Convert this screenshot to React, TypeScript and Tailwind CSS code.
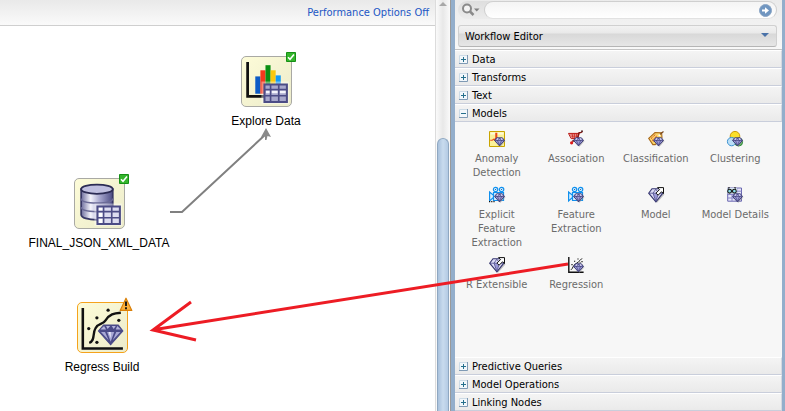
import React from "react";

type Kind =
  | "anomaly"
  | "association"
  | "classification"
  | "clustering"
  | "explicit"
  | "feature"
  | "model"
  | "details"
  | "regression";

const MODELS: { label: string; kind: Kind }[] = [
  { label: "Anomaly Detection", kind: "anomaly" },
  { label: "Association", kind: "association" },
  { label: "Classification", kind: "classification" },
  { label: "Clustering", kind: "clustering" },
  { label: "Explicit Feature Extraction", kind: "explicit" },
  { label: "Feature Extraction", kind: "feature" },
  { label: "Model", kind: "model" },
  { label: "Model Details", kind: "details" },
  { label: "R Extensible", kind: "model" },
  { label: "Regression", kind: "regression" },
];

/* Small gem that marks every mining item, drawn in the lower right corner. */
function SmallGem() {
  return (
    <g>
      <path d="M8 7.5h6.500l2 2.800-5.200 5.700-5.300-5.700z" fill="#9a9a9a" opacity="0.5" />
      <path d="M7.600 6.800h5.800l2 2.700-4.900 5.400-4.900-5.400z" fill="#9c9ad6" stroke="#35356f" strokeWidth="0.9" />
      <path d="M5.800 9.500h9.400M8.400 9.500l2.100 4.800 2.100-4.800-2.100-2.400z" fill="none" stroke="#35356f" strokeWidth="0.6" />
      <path d="M8 7.600h1.200v1H8zM12 7.600h1.200v1H12z" fill="#fff" />
    </g>
  );
}

function Camera() {
  return (
    <g fill="#d8f0ff" stroke="#1090ee" strokeWidth="1.2">
      <circle cx="6.600" cy="2.500" r="2.200" />
      <circle cx="12.600" cy="2.500" r="2.200" />
      <path d="M4.500 5.500h10v8h-10z" />
      <path d="M.6 5v9l3.900-3.500V8.300z" />
      <path d="M6.100 2.500h1M12.100 2.500h1" stroke="#1a5fa8" strokeWidth="1" />
    </g>
  );
}

function ModelIcon({ kind }: { kind: Kind }) {
  return (
    <svg className="size-4 shrink-0 overflow-visible" viewBox="0 0 16 16" aria-hidden="true">
      {kind === "anomaly" && (
        <g>
          <path d="M.5.5h15v15H.5z" fill="#fbf19a" stroke="#c9a400" />
          <path d="M1.500 1.500h13v2h-13z" fill="#fffbd8" />
          <path d="M1.200 9.300h2l1.200-1 1.400 1V8l1-.5V2.200h1V8h3" fill="none" stroke="#ec4a18" strokeWidth="1.100" />
          <SmallGem />
        </g>
      )}
      {kind === "association" && (
        <g>
          <path d="M.5 2.400h10.800L9.700 7.600H3.200z" fill="#fbd0cc" stroke="#b81410" strokeWidth="1" />
          <path d="M2 4h9M3 5.800h7.400M4 2.400l1 5M6.400 2.400v5M8.800 2.400l-.6 5" stroke="#c82018" strokeWidth=".8" />
          <path d="M14.600.4l-1.800 1.200H11L9.400 7.600 4 10.200h5" fill="none" stroke="#7c1410" strokeWidth="1.200" />
          <circle cx="3.600" cy="11.800" r="1.600" fill="#e01818" />
          <path d="M13 .2h2" stroke="#502020" strokeWidth="1.200" />
          <SmallGem />
        </g>
      )}
      {kind === "classification" && (
        <g>
          <path d="M.7 7.400L7 1.500l6.600.3.4 5-6.800 6.800H4.800z" fill="#fbd66a" stroke="#a8691a" strokeWidth="1.100" />
          <path d="M3 7.600L7.600 3.200M4 9.600l5-4.800M5.600 11l4-4" stroke="#d03a18" strokeWidth="1" strokeDasharray="1.4 .6" />
          <path d="M11.800 3.400L15.500.6" stroke="#7a4a20" strokeWidth="1.200" />
          <circle cx="11.400" cy="4.200" r="1" fill="#fff" />
          <SmallGem />
        </g>
      )}
      {kind === "clustering" && (
        <g>
          <circle cx="8" cy="5.200" r="4.800" fill="#fbe02a" stroke="#cf9a08" strokeWidth="1" />
          <circle cx="11.600" cy="11" r="4" fill="#5fc25a" stroke="#2c8a38" strokeWidth="1" />
          <circle cx="4.600" cy="10.600" r="4.200" fill="#b5dcf6" fillOpacity=".9" stroke="#3d92d0" strokeWidth="1" />
          <SmallGem />
        </g>
      )}
      {kind === "explicit" && (
        <g>
          <Camera />
          <SmallGem />
          <path d="M0 14.600h6" stroke="#111" strokeWidth="1.200" strokeDasharray="1.200 1" />
        </g>
      )}
      {kind === "feature" && (
        <g>
          <Camera />
          <SmallGem />
        </g>
      )}
      {kind === "model" && (
        <g>
          <path d="M5 3h7.400l4 4.400L9 15.800.8 7z" fill="#8a8a8a" opacity=".5" />
          <path d="M4 1.700h7.600l3.200 4.500-6.900 8.600L.7 6.200z" fill="#dcdcf6" stroke="#35356f" strokeWidth="1.100" />
          <path d="M5.200 6.400h5l-2.400 7.400z" fill="#9a98d8" />
          <path d="M1 6.200h13.400M5 6.200l2.800 8 2.800-8-2.800-4z" fill="none" stroke="#4b4b8c" strokeWidth=".8" />
          <path d="M9.500.6h6v6l-1.900-1.900-3.500 3.500-2.100-2.100 3.500-3.500z" fill="#fff" stroke="#111" strokeWidth="1" />
        </g>
      )}
      {kind === "details" && (
        <g>
          <path d="M.7 1h13.800v13.200H.7z" fill="#e6e6fa" stroke="#6a68b0" strokeWidth="1" />
          <path d="M.7 7.500h13.800M.7 11h13.800M5 1v13M9.800 1v13M9.800 4.200h4.700" stroke="#8886c6" strokeWidth="1" />
          <path d="M.3 1.200h9.600v5.200H.3z" fill="#e8fbff" />
          <circle cx="2.600" cy="4.200" r="1.900" fill="#8de0ec" stroke="#111" strokeWidth="1.100" />
          <circle cx="7.400" cy="4.200" r="1.900" fill="#8de0ec" stroke="#111" strokeWidth="1.100" />
          <path d="M1 1.200l1.600-.6M9 1.200L7.400.6M4.400 3.800h1.200" stroke="#111" strokeWidth="1.100" />
          <SmallGem />
        </g>
      )}
      {kind === "regression" && (
        <g>
          <path d="M.8 0v15.200h14.800" fill="none" stroke="#111" strokeWidth="1.400" />
          <path d="M3 12.800c2-1.400 2-4.400 4.400-5.800S11 4.600 14 1.400" fill="none" stroke="#111" strokeWidth="1" />
          <path d="M3.400 7.600h1.200M6 4.200h1.200M9.400 2h1.200M13.400 4.600h1.200M11.600 5.800h1" stroke="#111" strokeWidth="1.100" />
          <SmallGem />
        </g>
      )}
    </svg>
  );
}

/* Table overlay shared by the data nodes. */
function TableMark({ header }: { header?: boolean }) {
  return (
    <g>
      <path d="M20 25h27v22H20z" fill="#fff" opacity="0.4" />
      <path d="M23 28h22v17H23z" fill={header ? "#a8a8cc" : "#dcdcf0"} />
      {header ? (
        <path d="M24.500 33.500h4v3h-4zM30 33.500h6v3h-6zM38 33.500h6v3h-6z" fill="#f4f4fc" />
      ) : (
        <path d="M24 29h4v3h-4zM24 34h4v4h-4zM24 40h4v4h-4z" fill="#fff" />
      )}
      <path d="M23 28h22v17H23z" fill="none" stroke="#4c4c86" strokeWidth="2" />
      <path d="M23 33h22M23 39h22M29 28v17M37 28v17" stroke="#4c4c86" strokeWidth="1.600" />
    </g>
  );
}

function ExploreArt() {
  return (
    <g>
      <path d="M6.500 6v33.500h17" fill="none" stroke="#111" strokeWidth="2.700" />
      <path d="M14 20h5v17h-5z" fill="#0c5bc6" />
      <path d="M19 14h5v23h-5z" fill="#f3391c" />
      <path d="M24 9h5v28h-5z" fill="#0a8f12" />
      <path d="M29 14h5v23h-5z" fill="#fbc80c" />
      <path d="M34 19h5v18h-5z" fill="#149af4" />
      <TableMark header />
    </g>
  );
}

function DatabaseArt() {
  return (
    <g>
      <defs>
        <linearGradient id="drum" x1="0" x2="1">
          <stop offset="0" stopColor="#6c6c9c" />
          <stop offset="0.300" stopColor="#f4f4fc" />
          <stop offset="0.600" stopColor="#a4a4cc" />
          <stop offset="1" stopColor="#4c4c84" />
        </linearGradient>
      </defs>
      <path d="M7 11v25c0 3 7 5 15.500 5S38 39 38 36V11z" fill="url(#drum)" stroke="#383866" strokeWidth="1.700" />
      <path d="M7 20c0 3 7 4.500 15.500 4.500S38 23 38 20M7 28.500c0 3 7 4.500 15.500 4.500S38 31.500 38 28.500" fill="none" stroke="#6a6a96" strokeWidth="1.500" />
      <ellipse cx="22.500" cy="11" rx="15.500" ry="4.500" fill="#c0c0e0" stroke="#2c2c54" strokeWidth="1.800" />
      <TableMark />
    </g>
  );
}

function RegressArt() {
  return (
    <g>
      <path d="M5.700 6v39.500H45" fill="none" stroke="#111" strokeWidth="2.500" />
      <path d="M12 40c6-2 3-9 6-14 3-6 7-3 10-8 4-6 8-7 15-7.500" fill="none" stroke="#111" strokeWidth="2.300" />
      <g fill="#111">
        <circle cx="11.500" cy="26" r="1.600" />
        <circle cx="19.500" cy="15.500" r="1.600" />
        <circle cx="30.500" cy="8" r="1.600" />
        <circle cx="41" cy="18" r="1.600" />
        <circle cx="19.500" cy="39.500" r="1.600" />
      </g>
      <path d="M26 22.500h14.500l4.500 6L33 42 21 28.500z" fill="#4a4a88" stroke="#4a4a88" />
      <path d="M23 27l3.500-3.500 2 3.500zM28.500 23.500h4l-2.500 3zM34 23.500h4l-2 3zM39.500 23.500L43 27h-5z" fill="#b4b4dc" />
      <path d="M23.500 29.500h4l3.500 8zM29.500 29.500h7L33 39zM38.500 29.500h4L35 37.500z" fill="#a8a8d6" />
      <path d="M31 29.500h2v6z" fill="#ececfa" />
    </g>
  );
}

function Badge({ warning }: { warning?: boolean }) {
  if (warning) {
    return (
      <svg className="absolute -right-1.5 -top-1.5 size-3.5" viewBox="0 0 12 12" role="img" aria-label="Warning">
        <path d="M6 1l5 10.500H1z" fill="#fbb03a" stroke="#d97f08" strokeLinejoin="round" />
        <path d="M5.200 3.800h1.600v4H5.200zM5.200 8.800h1.600v1.600H5.200z" fill="#111" />
      </svg>
    );
  }
  return (
    <svg className="absolute -right-[5px] -top-[5px] size-2.5" viewBox="0 0 10 10" role="img" aria-label="Complete">
      <path d="M.5.5h9v9h-9z" fill="#35b52c" stroke="#159015" />
      <path d="M2 5.300l2 2L8 2.500" fill="none" stroke="#fff" strokeWidth="1.500" />
    </svg>
  );
}

function Node({ label, place, warning, children }: { label: string; place: string; warning?: boolean; children: React.ReactNode }) {
  return (
    <button type="button" className={`absolute flex w-40 flex-col items-center gap-1.5 ${place}`}>
      <span
        className={`relative block size-[51px] rounded-[5px] border bg-linear-to-br from-[#fdfcd8] to-[#ecebcb] ${
          warning ? "border-[#f5a31c]" : "border-[#a9a9a4]"
        }`}
      >
        <svg className="absolute -left-px -top-px size-[51px]" viewBox="0 0 50 50" aria-hidden="true">
          {children}
        </svg>
        <Badge warning={warning} />
      </span>
      <span className="text-xs leading-4 text-black [font-family:'Liberation_Sans',Arial,sans-serif]">{label}</span>
    </button>
  );
}

function SectionHeader({ label, open }: { label: string; open?: boolean }) {
  return (
    <button
      type="button"
      aria-expanded={!!open}
      className="flex h-[18px] w-full shrink-0 items-center gap-1 border-b border-r border-t border-b-[#c9cedb] border-r-[#d4d8e0] border-t-white bg-linear-to-b from-[#f4f4f4] to-[#eaeaea] pl-1 text-left text-black"
    >
      <svg className="size-[9px] shrink-0" viewBox="0 0 9 9" aria-hidden="true">
        <path d="M0 0h9v9H0z" fill="#f2f7fb" />
        <path d="M.5 8V.5H8" fill="none" stroke="#cddbe6" />
        <path d="M0 8.500h8.500V0" fill="none" stroke="#7f9ab4" />
        <path d={open ? "M2 4.500h5" : "M2 4.500h5M4.500 2v5"} stroke="#256f8c" />
      </svg>
      <span className="pt-0.5">{label}</span>
    </button>
  );
}

export default function App() {
  return (
    <div className="relative flex h-screen min-h-96 w-full overflow-hidden bg-white text-[11px] leading-[14px] [font-family:'DejaVu_Sans_Condensed','DejaVu_Sans',sans-serif]">
      <main className="flex min-w-0 flex-1 flex-col">
        <header className="flex h-[26px] shrink-0 items-center justify-end border-b border-[#cfcfcf] bg-linear-to-b from-[#e9e9e9] to-[#fafafa] pr-1.5">
          <a href="#options" className="whitespace-nowrap text-[#2257c5]">
            Performance Options Off
          </a>
        </header>
        <section className="relative flex-1" aria-label="Workflow">
          <svg className="pointer-events-none absolute left-0 top-0 size-full" aria-hidden="true">
            <path d="M170 186h12l84-78" fill="none" stroke="#808080" strokeWidth="2" />
            <path d="M266 102l5 9-3.500-1-1 4h-1.500v-4l-4 1z" fill="#8a8a8a" />
          </svg>
          <Node label="Explore Data" place="left-[186px] top-[30px]">
            <ExploreArt />
          </Node>
          <Node label="FINAL_JSON_XML_DATA" place="left-[19px] top-[152px]">
            <DatabaseArt />
          </Node>
          <Node label="Regress Build" place="left-[22px] top-[276px]" warning>
            <RegressArt />
          </Node>
        </section>
      </main>

      <div className="flex w-4 shrink-0 flex-col border-l border-r border-l-[#dcdcdc] border-r-[#9a9a9a] bg-linear-to-r from-[#fafafa] via-[#e8e8e8] to-[#fafafa]">
        <button type="button" aria-label="Scroll up" className="flex h-[138px] shrink-0 justify-center pt-0.5">
          <svg className="h-1 w-2" viewBox="0 0 8 4" aria-hidden="true">
            <path d="M4 0l4 4H0z" fill="#a8a8a8" />
          </svg>
        </button>
        <div className="mx-px flex-1 rounded-t-md border border-b-0 border-[#8fa8c2] bg-linear-to-r from-[#a9c1dc] via-[#c8dbee] to-[#b4cbe4]" />
      </div>

      <aside className="flex w-[334px] shrink-0 flex-col border-l-4 border-r-[3px] border-[#93aecb] bg-[#f7f7f7]">
        <div className="flex flex-col gap-1.5 border-b border-[#c4c4c4] bg-linear-to-b from-[#ebebeb] to-[#f8f8f8] pb-0.5 pl-[3px] pr-[5px] pt-px">
          <div className="flex h-[18px] items-center rounded-full bg-linear-to-b from-[#dedede] to-[#ececec]">
            <button type="button" aria-label="Search options" className="flex w-[26px] shrink-0 items-center pl-1">
              <svg className="h-3.5 w-[18px]" viewBox="0 0 18 14" aria-hidden="true">
                <circle cx="5" cy="5.500" r="4" fill="#f4f4f4" stroke="#8a8a8a" strokeWidth="2" />
                <path d="M8 8.500l3.500 3.500" stroke="#8a8a8a" strokeWidth="2.500" />
                <path d="M12 5.500h5.500L14.700 8.500z" fill="#808080" />
              </svg>
            </button>
            <div className="flex h-full min-w-0 flex-1 items-center rounded-full border border-[#cfcfcf] border-b-[#e2e2e2] bg-linear-to-b from-[#f4f4f4] to-white pl-2 pr-1">
              <input aria-label="Search components" className="h-3.5 min-w-0 flex-1 bg-transparent outline-none" />
              <button type="button" aria-label="Go" className="size-[13px]">
                <svg className="size-[13px]" viewBox="0 0 13 13" aria-hidden="true">
                  <circle cx="6.500" cy="6.500" r="6" fill="#6f95c0" stroke="#8aa5c4" />
                  <path d="M3 6.500h4" stroke="#fff" strokeWidth="2" />
                  <path d="M6 3.300l4 3.200-4 3.200z" fill="#fff" />
                </svg>
              </button>
            </div>
          </div>
          <div className="relative flex h-[22px]">
            <select
              aria-label="Component page"
              className="w-full appearance-none rounded-[3px] border border-[#d0d0d0] border-b-[#b5b5b5] bg-[linear-gradient(#f2f2f2_0%,#e9e9e9_35%,#d8d8d8_40%,#e6e6e6_100%)] pl-1.5 pt-0.5 text-black outline-none"
            >
              <option>Workflow Editor</option>
            </select>
            <svg className="pointer-events-none absolute right-2 top-2 h-1 w-2" viewBox="0 0 8 4" aria-hidden="true">
              <path d="M0 0h8L4 4z" fill="#4a72a8" />
            </svg>
          </div>
        </div>

        <SectionHeader label="Data" />
        <SectionHeader label="Transforms" />
        <SectionHeader label="Text" />
        <SectionHeader label="Models" open />
        <div className="grid min-h-0 flex-1 grid-cols-4 content-start gap-y-[7px] pl-0.5 pr-[7px] pt-[9px]">
          {MODELS.map((m) => (
            <button
              key={m.label}
              type="button"
              className="flex flex-col items-center gap-[5px] px-1 text-center text-[#6b6b6b]"
            >
              <ModelIcon kind={m.kind} />
              <span>{m.label}</span>
            </button>
          ))}
        </div>
        <SectionHeader label="Predictive Queries" />
        <SectionHeader label="Model Operations" />
        <SectionHeader label="Linking Nodes" />
      </aside>

      {/* Red pointer drawn over both panes */}
      <svg className="pointer-events-none absolute left-0 top-0 size-full" aria-hidden="true">
        <path d="M568 264L155 329.500M191 302l-38 28 43 10" fill="none" stroke="#ed1c24" strokeWidth="3" />
      </svg>
    </div>
  );
}
